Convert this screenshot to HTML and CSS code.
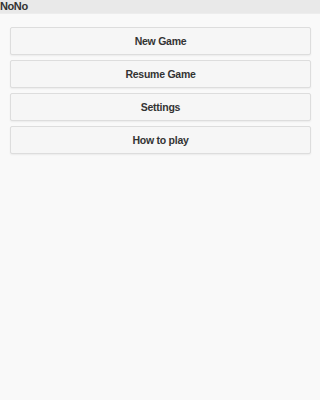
FILE: index.html
```html
<!DOCTYPE html>
<html>
<head>
<meta charset="utf-8">
<meta name="viewport" content="width=device-width, initial-scale=1">
<link rel="stylesheet" href="styles.css">
</head>
<body>
<div class="page">
  <div class="header">NoNo</div>
  <div class="menu">
    <div class="btn">New Game</div>
    <div class="btn">Resume Game</div>
    <div class="btn">Settings</div>
    <div class="btn">How to play</div>
  </div>
</div>
</body>
</html>
```
FILE: styles.css
```css
html, body {
  margin: 0;
  padding: 0;
  background: #f9f9f9;
}
.page {
  min-height: 400px;
  font-family: "Liberation Sans", Arial, sans-serif;
  color: #333;
  background: #f9f9f9;
}
.header {
  height: 13px;
  line-height: 13px;
  background: #e9e9e9;
  border-bottom: 1px solid #ededed;
  font-weight: bold;
  font-size: 11px;
  letter-spacing: -0.4px;
}
.menu {
  display: flex;
  flex-direction: column;
  gap: 5px;
  padding: 13px 9px 0 10px;
}
.btn {
  height: 26px;
  line-height: 26px;
  text-align: center;
  font-weight: bold;
  font-size: 10.5px;
  letter-spacing: -0.25px;
  background: #f6f6f6;
  border: 1px solid #dddddd;
  border-radius: 2px;
  box-shadow: 0 1px 2px rgba(0,0,0,0.06);
}
```
